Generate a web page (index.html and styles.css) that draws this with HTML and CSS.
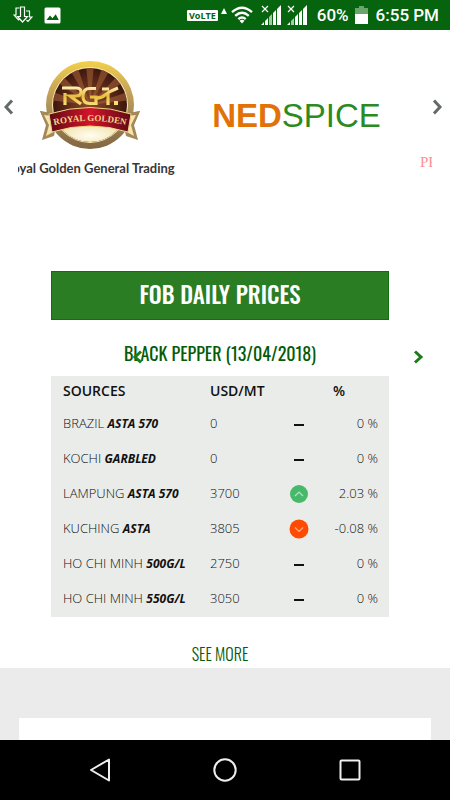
FILE: index.html
```html
<!DOCTYPE html>
<html lang="en">
<head>
<meta charset="utf-8">
<meta name="viewport" content="width=device-width, initial-scale=1">
<title>FOB Daily Prices</title>
<link rel="stylesheet" href="styles.css">
</head>
<body>
<header class="status">
  <div class="status-left">
    <svg width="20" height="18" viewBox="0 0 20 18" fill="none" stroke="#fff" stroke-width="1.200">
      <path d="M6.500 2H3v7H1l4.500 5L7 12.500"/>
      <path d="M7.500 1h4v9.500h3L9.500 16l-5-5.500h3z"/>
      <path d="M13 5h3.500v6H19l-4 4.500-1.500-1.500"/>
    </svg>
    <svg width="17" height="17" viewBox="0 0 17 17">
      <rect x=".5" y=".5" width="16" height="16" rx="1.500" fill="#fff"/>
      <path d="M2.500 13l3.500-4.500 2.500 2.800 3.200-4L14.800 13z" fill="#05640d"/>
    </svg>
  </div>
  <div class="status-right">
    <span class="volte">VoLTE</span>
    <svg class="tri" width="6" height="6" viewBox="0 0 6 6"><path d="M3 0l3 6H0z" fill="#fff"/></svg>
    <svg class="wifi" width="22" height="18" viewBox="0 0 22 18" fill="none" stroke="#fff" stroke-width="2.300">
      <path d="M1 6.200Q11-2.800 21 6.200M4.200 9.800Q11 3.600 17.800 9.800M7.300 13.200Q11 9.800 14.700 13.200"/>
      <path d="M8.500 14.800Q11 12.800 13.500 14.800L11 17.600z" fill="#fff" stroke="none"/>
    </svg>
    <svg class="signal" width="20" height="20" viewBox="0 0 20 20">
      <path d="M1 1l6 6M7 1L1 7" stroke="#fff" stroke-width="1.200"/>
      <path d="M3 17V20H0zM4 16l3-3V20H4zM12 8l3-3V20h-3zM16 4l4-4V20h-4z" fill="#fff"/>
      <path d="M8 12l3-3V20H8z" fill="#a5cba7"/>
    </svg>
    <svg class="signal two" width="20" height="20" viewBox="0 0 20 20">
      <path d="M1 1l6 6M7 1L1 7" stroke="#fff" stroke-width="1.200"/>
      <path d="M3 17V20H0zM8 12l3-3V20H8zM12 8l3-3V20h-3zM16 4l4-4V20h-4z" fill="#fff"/>
      <path d="M4 16l3-3V20H4z" fill="#a5cba7"/>
    </svg>
    <span class="status-text">60%</span>
    <svg class="battery" width="13" height="18" viewBox="0 0 13 18">
      <path d="M4 0h5v2h4v6H0V2h4z" fill="#69a66c"/><path d="M0 8h13v10H0z" fill="#fff"/>
    </svg>
    <time class="status-text">6:55 PM</time>
  </div>
</header>

<main>
  <section class="brands" aria-label="Brands">
    <button class="arrow" type="button" aria-label="Previous brand">
      <svg width="11" height="16" viewBox="0 0 11 16"><path d="M8 1.500L2 8l6 6.500" fill="none" stroke="#646b67" stroke-width="3"/></svg>
    </button>
    <div class="window">
      <div class="track">
        <figure class="brand">
          <svg width="100" height="90" viewBox="0 0 100 90">
            <defs>
              <linearGradient id="ring" x1="0" y1="0" x2="0" y2="1">
                <stop offset="0" stop-color="#f3d14a"/><stop offset=".3" stop-color="#cba858"/><stop offset=".6" stop-color="#a68b59"/><stop offset="1" stop-color="#806642"/>
              </linearGradient>
              <radialGradient id="disc" cx=".5" cy=".5" r=".55">
                <stop offset="0" stop-color="#8a4a2a"/><stop offset="1" stop-color="#35110b"/>
              </radialGradient>
              <linearGradient id="band" x1="0" x2="1" y1="0" y2="0">
                <stop offset="0" stop-color="#5f0b14"/><stop offset=".5" stop-color="#d3142b"/><stop offset="1" stop-color="#5f0b14"/>
              </linearGradient>
              <linearGradient id="gold" gradientUnits="userSpaceOnUse" x1="0" x2="0" y1="26" y2="46">
                <stop offset="0" stop-color="#fff6c0"/><stop offset=".5" stop-color="#e9bd3c"/><stop offset="1" stop-color="#f8e382"/>
              </linearGradient>
              <radialGradient id="cream" cx=".5" cy=".5" r=".6">
                <stop offset="0" stop-color="#fffdf0"/><stop offset="1" stop-color="#ead58f"/>
              </radialGradient>
              <clipPath id="inner"><circle cx="50" cy="45" r="37"/></clipPath>
              <path id="arc" d="M10 66Q50 56 90 66"/>
            </defs>
            <circle cx="50" cy="45" r="44" fill="url(#ring)"/>
            <circle cx="50" cy="45" r="38" fill="#fae9ae"/>
            <circle cx="50" cy="45" r="37" fill="url(#disc)"/>
            <g clip-path="url(#inner)">
              <path d="M50 45L46 5h8zM50 45L29 8l8-3zM50 45L63 5l8 3zM50 45L14 20l6-7zM50 45L80 13l6 7zM50 45L9 40l1-9zM50 45l41-14 1 9z" fill="#a35f35" opacity=".6"/>
              <path d="M8 67Q50 55 92 67V90H8z" fill="url(#cream)"/>
            </g>
            <path d="M0 51l12 3-1 15-8 11 4-13zM100 51l-12 3 1 15 8 11-4-13z" fill="#a4885a"/>
            <path d="M0 51l12 2q38-10 76 0l12-2-6 14 4 15-12-4-1-5q-36-10-70 0l-1 5-12 4 4-15z" fill="#a4885a"/>
            <path d="M4 55l9 1 2 15-9 5 3-11zM96 55l-9 1-2 15 9 5-3-11z" fill="#f5e4ab"/>
            <path d="M9 54q41-13 82 0l-3 18q-38-12-76 0z" fill="url(#band)" stroke="#efd486" stroke-width="1"/>
            <text class="ribbon"><textPath href="#arc" startOffset="50%" text-anchor="middle">ROYAL GOLDEN</textPath></text>
            <g fill="none" stroke="url(#gold)" stroke-width="3.200">
              <path d="M22 28h14q5 0 5 4t-5 4h-6l11 8M25 33v12"/>
              <path d="M56 28.500H50q-7 0-7 7.500t7 7.500h6V37h-6"/>
              <path d="M56 38q6 0 9-3 5-4 13-7M62 29h7M68 32v13"/>
            </g>
            <rect x="74" y="41" width="4" height="4" fill="#f9df74"/>
          </svg>
          <figcaption>Royal Golden General Trading</figcaption>
        </figure>
        <div class="brand nedspice"><strong>NED</strong>SPICE</div>
        <div class="brand next-brand">PEPPER</div>
      </div>
    </div>
    <button class="arrow arrow-next" type="button" aria-label="Next brand">
      <svg width="11" height="16" viewBox="0 0 11 16"><path d="M2 1.500L8 8l-6 6.500" fill="none" stroke="#646b67" stroke-width="3"/></svg>
    </button>
  </section>

  <section class="prices">
    <h1>FOB DAILY PRICES</h1>
    <div class="product">
      <h2>BLACK PEPPER (13/04/2018)</h2>
      <button class="step prev" type="button" aria-label="Previous product">
        <svg width="11" height="14" viewBox="0 0 11 14"><path d="M9 1.500L3 7l6 5.500" fill="none" stroke="#1c7d16" stroke-width="3"/></svg>
      </button>
      <button class="step next" type="button" aria-label="Next product">
        <svg width="11" height="14" viewBox="0 0 11 14"><path d="M2 1.500L8 7l-6 5.500" fill="none" stroke="#1c7d16" stroke-width="3"/></svg>
      </button>
    </div>
    <table>
      <colgroup><col class="c-source"><col class="c-price"><col class="c-trend"><col></colgroup>
      <thead>
        <tr><th scope="col">SOURCES</th><th scope="col">USD/MT</th><th></th><th scope="col">%</th></tr>
      </thead>
      <tbody>
        <tr><td>BRAZIL <em>ASTA 570</em></td><td>0</td><td class="trend"><i class="flat"></i></td><td class="num">0 %</td></tr>
        <tr><td>KOCHI <em>GARBLED</em></td><td>0</td><td class="trend"><i class="flat"></i></td><td class="num">0 %</td></tr>
        <tr><td>LAMPUNG <em>ASTA 570</em></td><td>3700</td><td class="trend"><svg width="20" height="20" viewBox="0 0 20 20"><circle cx="10" cy="10" r="9" fill="#46b96b"/><path d="M6 12l4-4 4 4" fill="none" stroke="#b4e4c2" stroke-width="1.200"/></svg></td><td class="num">2.03 %</td></tr>
        <tr><td>KUCHING <em>ASTA</em></td><td>3805</td><td class="trend"><svg width="20" height="20" viewBox="0 0 20 20"><circle cx="10" cy="10" r="9.500" fill="#ff4a04"/><path d="M6 8.500l4 4 4-4" fill="none" stroke="#ffae86" stroke-width="1.200"/></svg></td><td class="num">-0.08 %</td></tr>
        <tr><td>HO CHI MINH <em>500G/L</em></td><td>2750</td><td class="trend"><i class="flat"></i></td><td class="num">0 %</td></tr>
        <tr><td>HO CHI MINH <em>550G/L</em></td><td>3050</td><td class="trend"><i class="flat"></i></td><td class="num">0 %</td></tr>
      </tbody>
    </table>
    <a class="more" href="#more">SEE MORE</a>
  </section>

  <section class="below" id="more"><div class="card"></div></section>
</main>

<nav class="keys" aria-label="System">
  <button type="button" aria-label="Back"><svg width="24" height="26" viewBox="0 0 24 26"><path d="M3 13L21 2.500v21z" fill="none" stroke="#eee" stroke-width="2" stroke-linejoin="round"/></svg></button>
  <button type="button" aria-label="Home"><svg width="24" height="26" viewBox="0 0 24 26"><circle cx="12" cy="13" r="10.700" fill="none" stroke="#eee" stroke-width="2"/></svg></button>
  <button type="button" aria-label="Recent apps"><svg width="24" height="26" viewBox="0 0 24 26"><rect x="2.500" y="3.500" width="19" height="19" rx="1" fill="none" stroke="#eee" stroke-width="2"/></svg></button>
</nav>
</body>
</html>
```
FILE: styles.css
```css
* { box-sizing: border-box; }
body {
  margin: 0;
  min-height: 100vh;
  display: flex;
  flex-direction: column;
  background: #fff;
  color: #111;
  font-family: "Open Sans", "Noto Sans", sans-serif;
  font-size: 13px;
}
button { border: 0; padding: 0; background: none; cursor: pointer; }
svg { display: block; flex: none; }
h1, h2, figure { margin: 0; }

.status {
  display: flex;
  justify-content: space-between;
  align-items: center;
  height: 30px;
  padding: 0 11px 0 13px;
  background: #05640d;
  color: #fff;
}
.status-left, .status-right { display: flex; align-items: center; }
.status-left { gap: 11px; }
.volte {
  padding: 0 2px;
  border-radius: 1px;
  background: #fff;
  color: #05640d;
  font: bold 9px/11px "Open Sans", sans-serif;
}
.tri { margin: 0 4px 8px 3px; }
.signal { margin-left: 8px; }
.two { margin-left: 6px; }
.status-text { margin-left: 10px; font: 500 17px/30px Roboto, sans-serif; }
.battery { margin-left: 6px; }
time.status-text { margin-left: 8px; }

main { flex: 1; display: flex; flex-direction: column; }

.brands { display: flex; height: 153px; }
.arrow { flex: 0 0 18px; display: flex; justify-content: center; align-items: center; }
.arrow-next { justify-content: flex-start; }
.window { flex: 1; min-width: 0; overflow: hidden; }
.track {
  display: grid;
  grid-template-columns: repeat(3, 50%);
  height: 100%;
  margin: 0 32px 0 -32px;
}
.brand { padding-top: 30px; text-align: center; white-space: nowrap; }
.brand svg { margin: 0 auto; }
.ribbon { font: bold 9px "Liberation Serif", serif; fill: #f3d489; }
figcaption {
  margin-top: 8px;
  color: #3a3536;
  font: 700 13px/20px Lato, sans-serif;
}
.nedspice {
  padding-top: 66px;
  color: #2c8a22;
  font: 33px/40px "Liberation Sans", sans-serif;
}
.nedspice strong { color: #e27208; }
.next-brand {
  padding: 122px 0 0 20px;
  color: #ff8f92;
  font: 15px/20px "Liberation Serif", serif;
  text-align: left;
}

.prices {
  display: flex;
  flex-direction: column;
  padding: 88px 61px 0 51px;
}
h1, h2, .more {
  font-family: Oswald, "Roboto Condensed", "Liberation Sans Narrow", sans-serif;
  text-align: center;
}
h1 {
  padding-bottom: 2px;
  border: 1px solid #0d7011;
  background: #2b7d23;
  color: #fff;
  font-size: 23px;
  font-weight: 500;
  line-height: 45px;
}
.product { position: relative; padding: 19px 0 8px; }
h2 { color: #045b08; font-size: 18px; font-weight: 400; line-height: 29px; white-space: nowrap; }
.step { position: absolute; top: 30px; }
.prev { left: 81px; }
.next { right: -35px; }

table { width: 100%; table-layout: fixed; border-collapse: collapse; background: #eaecea; margin-bottom: 24px; }
.c-source { width: 147px; }
.c-price { width: 73px; }
.c-trend { width: 50px; }
th, td { padding: 0 0 0 12px; text-align: left; white-space: nowrap; }
th { height: 31px; padding-bottom: 2px; font-weight: 600; font-size: 14px; }
td { height: 35px; padding-bottom: 4px; font-weight: 300; }
em { font-weight: 700; font-size: 12px; }
td.trend { padding: 1px 0 3px 18px; }
.flat { display: block; width: 10px; height: 2px; margin: 2px 0 0 5px; background: #111; }
td.num { padding-right: 11px; padding-left: 0; text-align: right; }
.more {
  align-self: center;
  color: #045b08;
  font-size: 16px;
  font-weight: 300;
  line-height: 27px;
  text-decoration: none;
}
.below { flex: 1; padding: 50px 19px 0; background: #ebebeb; display: flex; }
.card { flex: 1; background: #fff; }

.keys {
  display: flex;
  justify-content: center;
  align-items: center;
  gap: 101px;
  height: 60px;
  background: #000;
}
```
